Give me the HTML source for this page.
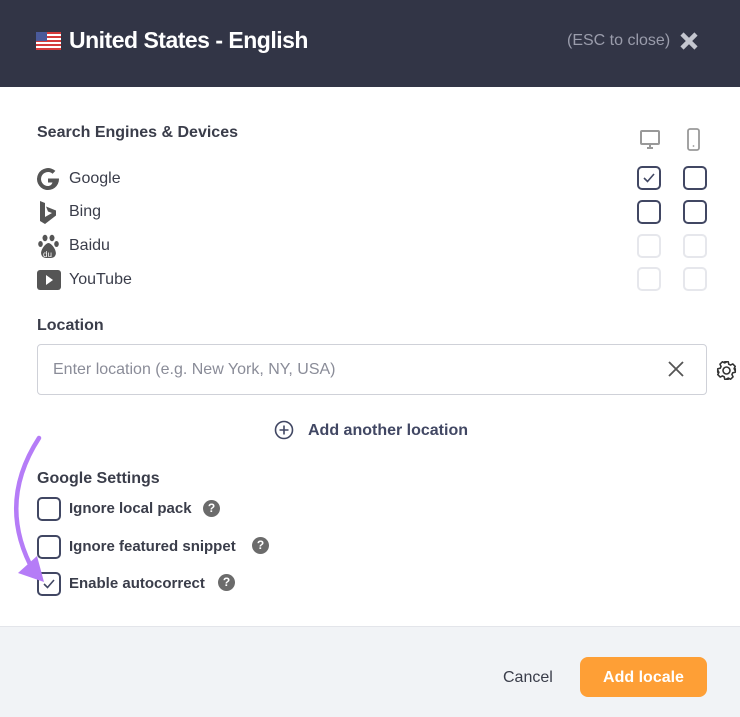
<!DOCTYPE html>
<html><head><style>
*{box-sizing:border-box;margin:0;padding:0}
body{width:740px;height:717px;background:#fff;font-family:"Liberation Sans",sans-serif;color:#3a3d4a;position:relative;overflow:hidden}
.a{position:absolute}
.hdr{left:0;top:0;width:740px;height:87px;background:#323546}
.cb{position:absolute;width:24px;height:24px;border:2px solid #414763;border-radius:5px;background:#fff}
.cb.l{border-color:#e6e7ec}
.t{position:absolute;font-size:16px;color:#3a3d4a}
.q{position:absolute;width:17px;height:17px;border-radius:50%;background:#6b6b6b;color:#fff;font-size:12px;font-weight:bold;text-align:center;line-height:17px}
</style></head><body>
<div class="a hdr"></div>
<svg class="a" style="left:36px;top:32px" width="25" height="18"><rect width="25" height="18" rx="2" fill="#fff"/><g fill="#d43a3a"><rect y="0" width="25" height="2"/><rect y="4" width="25" height="2"/><rect y="8" width="25" height="2"/><rect y="12" width="25" height="2"/><rect y="16" width="25" height="2"/></g><rect width="11" height="9" fill="#4a5a9a"/></svg>
<div class="a" style="left:69px;top:27px;font-size:23px;color:#fff;font-weight:bold;letter-spacing:-0.5px">United States - English</div>
<div class="a" style="left:567px;top:32px;font-size:16px;color:#9a9cab">(ESC to close)</div>
<svg class="a" style="left:679px;top:31px" width="20" height="20"><path d="M3 3L17 17M17 3L3 17" stroke="#c4c6cf" stroke-width="4.5"/></svg>

<div class="t" style="left:37px;top:124px;font-weight:bold">Search Engines &amp; Devices</div>
<svg class="a" style="left:639px;top:130px" width="22" height="20"><rect x="2" y="1" width="18" height="13" rx="1" fill="none" stroke="#999" stroke-width="2"/><path d="M8 18h6M11 14v4" stroke="#999" stroke-width="2"/></svg>
<svg class="a" style="left:686px;top:128px" width="16" height="24"><rect x="2" y="1" width="11" height="21" rx="2" fill="none" stroke="#999" stroke-width="1.8"/><circle cx="7.5" cy="18" r="0.9" fill="#999"/></svg>

<svg class="a" style="left:37px;top:167px" width="24" height="24"><path d="M20 11.5h-8v4h4.5c-.7 2.2-2.5 3.5-4.5 3.5a7 7 0 1 1 4.6-12.3l2.8-2.8A11 11 0 1 0 23 12c0-.2 0-.4-.1-.5z" fill="#555" transform="translate(-1 0)"/></svg>
<div class="t" style="left:69px;top:170px">Google</div>
<svg class="a" style="left:38px;top:200px" width="22" height="26"><path d="M2 1l5 2v14l7-4-4-1.5-2-5 10 4v5L7 24 2 21z" fill="#555"/></svg>
<div class="t" style="left:69px;top:203px">Bing</div>
<svg class="a" style="left:37px;top:234px" width="24" height="26"><g fill="#555"><ellipse cx="8" cy="4" rx="2.5" ry="3.2"/><ellipse cx="15" cy="4" rx="2.5" ry="3.2"/><ellipse cx="3.5" cy="10" rx="2.3" ry="3"/><ellipse cx="19.5" cy="10" rx="2.3" ry="3"/><path d="M11.5 9c-3 0-9 8-7 12 1 3 4 3 7 3s6 0 7-3c2-4-4-12-7-12z"/></g><text x="6" y="23" font-size="8" fill="#fff" font-family="Liberation Sans">du</text></svg>
<div class="t" style="left:69px;top:237px">Baidu</div>
<svg class="a" style="left:37px;top:270px" width="24" height="20"><rect y="0" width="24" height="20" rx="3" fill="#555"/><path d="M9 5v10l7-5z" fill="#fff"/></svg>
<div class="t" style="left:69px;top:271px">YouTube</div>

<div class="cb" style="left:637px;top:166px"><svg width="20" height="20"><path d="M5 10l3.5 3.5L15 6" fill="none" stroke="#414763" stroke-width="1.6"/></svg></div>
<div class="cb" style="left:683px;top:166px"></div>
<div class="cb" style="left:637px;top:200px"></div>
<div class="cb" style="left:683px;top:200px"></div>
<div class="cb l" style="left:637px;top:234px"></div>
<div class="cb l" style="left:683px;top:234px"></div>
<div class="cb l" style="left:637px;top:267px"></div>
<div class="cb l" style="left:683px;top:267px"></div>

<div class="t" style="left:37px;top:317px;font-weight:bold">Location</div>
<div class="a" style="left:37px;top:344px;width:670px;height:51px;border:1px solid #cfd1d8;border-radius:4px"></div>
<div class="a" style="left:53px;top:361px;font-size:16px;color:#8a8c98">Enter location (e.g. New York, NY, USA)</div>
<svg class="a" style="left:668px;top:361px" width="16" height="16"><path d="M1 1L15 15M15 1L1 15" stroke="#555" stroke-width="1.8"/></svg>
<svg class="a" style="left:716px;top:360px" width="21" height="21" viewBox="0 0 24 24"><path d="M12 8a4 4 0 1 0 0 8 4 4 0 0 0 0-8zM10 2h4l.6 2.8 2 1 2.6-1.3 2.8 2.8-1.3 2.6 1 2L22 10v4l-2.8.6-1 2 1.3 2.6-2.8 2.8-2.6-1.3-2 1L14 22h-4l-.6-2.8-2-1-2.6 1.3-2.8-2.8 1.3-2.6-1-2L2 14v-4l2.8-.6 1-2L4.5 4.8l2.8-2.8 2.6 1.3 2-1z" fill="none" stroke="#333" stroke-width="1.8" stroke-linejoin="round"/></svg>

<svg class="a" style="left:274px;top:420px" width="20" height="20"><circle cx="10" cy="10" r="8.5" fill="none" stroke="#414763" stroke-width="1.6"/><path d="M10 5.5v9M5.5 10h9" stroke="#414763" stroke-width="1.6"/></svg>
<div class="t" style="left:308px;top:422px;font-weight:bold;color:#414763">Add another location</div>

<div class="t" style="left:37px;top:470px;font-weight:bold">Google Settings</div>
<div class="cb" style="left:37px;top:497px"></div>
<div class="t" style="left:69px;top:500px;font-size:15px;font-weight:bold">Ignore local pack</div>
<div class="q" style="left:203px;top:500px">?</div>
<div class="cb" style="left:37px;top:535px"></div>
<div class="t" style="left:69px;top:538px;font-size:15px;font-weight:bold">Ignore featured snippet</div>
<div class="q" style="left:252px;top:537px">?</div>
<div class="cb" style="left:37px;top:572px"><svg width="20" height="20"><path d="M5 10l3.5 3.5L15 6" fill="none" stroke="#414763" stroke-width="1.6"/></svg></div>
<div class="t" style="left:69px;top:575px;font-size:15px;font-weight:bold">Enable autocorrect</div>
<div class="q" style="left:218px;top:574px">?</div>

<svg class="a" style="left:0;top:430px" width="70" height="160"><path d="M39 8C15 45 5 90 34 142" fill="none" stroke="#b57cf7" stroke-width="4.5" stroke-linecap="round"/><path d="M18 143l26 9-7-26z" fill="#b57cf7"/></svg>

<div class="a" style="left:0;top:626px;width:740px;height:91px;background:#f1f3f6;border-top:1px solid #e3e5ea"></div>
<div class="a" style="left:503px;top:669px;font-size:16px;color:#3a3d4a">Cancel</div>
<div class="a" style="left:580px;top:657px;width:127px;height:40px;background:#fe9f36;border-radius:8px;color:#fff;font-weight:bold;font-size:16px;text-align:center;line-height:41px">Add locale</div>
</body></html>
